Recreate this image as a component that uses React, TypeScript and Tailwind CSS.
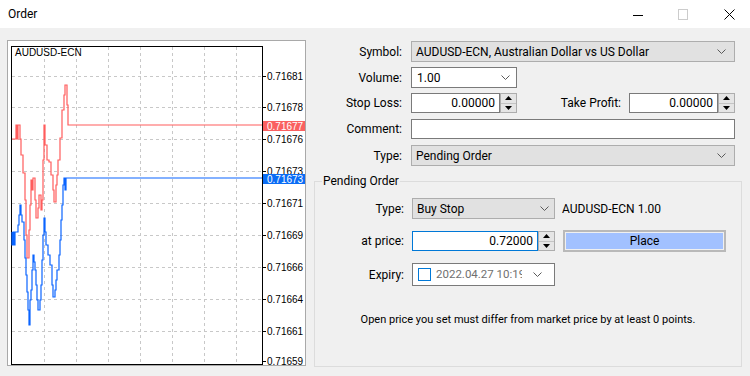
import React from "react";

// price axis labels, y is the grid line they sit on
const axis = [
  { y: 76, v: "0.71681" },
  { y: 107, v: "0.71678" },
  { y: 139, v: "0.71676" },
  { y: 171, v: "0.71673" },
  { y: 203, v: "0.71671" },
  { y: 235, v: "0.71669" },
  { y: 267, v: "0.71666" },
  { y: 299, v: "0.71664" },
  { y: 331, v: "0.71661" },
  { y: 361, v: "0.71659" },
];
const gridX = [44, 76, 108, 140, 172, 204, 236];
const gridY = [76, 107, 139, 171, 203, 235, 267, 299, 331];

const askPath =
  "M12,139 H16 V125 H17 V139 H18 V125 H20 V139 H21 V155 H23 V173 H25 V200 H26 V235 H27 V258 H29 V230 H30 V205 H31 V180 H32 V190 H33 V178 H35 V200 H36 V218 H38 V208 H39 V195 H41 V210 H42 V200 H43 V160 H44 V125 H45 V145 H47 V160 H49 V162 H51 V175 H53 V190 H54 V202 H56 V185 H57 V175 H58 V160 H60 V138 H62 V110 H64 V95 H65 V85 H67 V105 H68 V125 H262";
const bidPath =
  "M12,232 V245 H13 V232 H14 V245 H15 V232 H18 V225 H19 V215 H20 V205 H21 V215 H22 V222 H24 V240 H25 V258 H26 V275 H27 V292 H28 V310 H29 V325 H30 V300 H31 V290 H32 V270 H33 V255 H34 V262 H35 V270 H36 V285 H37 V300 H38 V310 H40 V300 H41 V285 H42 V260 H43 V235 H44 V218 H45 V232 H46 V245 H48 V255 H50 V265 H52 V285 H53 V297 H55 V290 H56 V280 H57 V270 H59 V255 H60 V240 H61 V220 H62 V205 H63 V185 H64 V178 H65 V190 H66 V178 H262";

const Chart = () => (
  <svg
    width={300}
    height={327}
    viewBox="7 40 300 327"
    className="shrink-0 font-['Liberation_Sans',sans-serif]"
  >
    <rect x={7.5} y={40.5} width={298} height={325} fill="#fff" stroke="#a9a9a9" />
    <rect x={11.5} y={46.5} width={251} height={318} fill="#fff" stroke="#000" />
    {gridX.map((x) => (
      <line key={x} x1={x + 0.5} x2={x + 0.5} y1={47} y2={364} stroke="#c8c8c8" strokeDasharray="3 3" />
    ))}
    {gridY.map((y) => (
      <line key={y} x1={12} x2={262} y1={y + 0.5} y2={y + 0.5} stroke="#c8c8c8" strokeDasharray="3 3" />
    ))}
    <text x={15} y={56} fontSize={10} fill="#000">
      AUDUSD-ECN
    </text>
    {axis.map((a) => (
      <g key={a.v}>
        <line x1={262} x2={266} y1={a.y + 0.5} y2={a.y + 0.5} stroke="#000" />
        <text x={267} y={a.y + 4} fontSize={10} fill="#000">
          {a.v}
        </text>
      </g>
    ))}
    <path d={askPath} fill="none" stroke="#ff5c5c" strokeWidth={1.2} />
    <path d={bidPath} fill="none" stroke="#0a64ff" strokeWidth={1.2} />
    <rect x={263} y={121} width={42} height={10} fill="#fa6060" />
    <text x={267} y={129.5} fontSize={10} fill="#fff">
      0.71677
    </text>
    <rect x={263} y={174} width={42} height={10} fill="#0a6cf5" />
    <text x={267} y={182.5} fontSize={10} fill="#fff">
      0.71673
    </text>
  </svg>
);

const Chevron = ({ className = "" }: { className?: string }) => (
  <svg width={9} height={5} viewBox="0 0 9 5" className={className}>
    <path d="M0.5,0.5 L4.5,4.5 L8.5,0.5" fill="none" stroke="#5a5a5a" strokeWidth={1} />
  </svg>
);

const Spinner = () => (
  <div className="flex flex-col w-[17px] h-full border border-[#adadad] bg-[#e5e5e5]">
    <div className="flex-1 flex items-center justify-center border-b border-[#c4c4c4]">
      <svg width={7} height={4} viewBox="0 0 7 4">
        <path d="M3.5,0 L7,4 L0,4 Z" fill="#000" />
      </svg>
    </div>
    <div className="flex-1 flex items-center justify-center">
      <svg width={7} height={4} viewBox="0 0 7 4">
        <path d="M0,0 L7,0 L3.5,4 Z" fill="#000" />
      </svg>
    </div>
  </div>
);

const Label = ({ children, w = "w-[88px]" }: { children: React.ReactNode; w?: string }) => (
  <div className={`${w} shrink-0 text-right`}>{children}</div>
);

export default function App() {
  return (
    <div className="w-[750px] h-[376px] overflow-hidden bg-[#f0f0f0] text-[12px] text-black font-['Roboto',sans-serif]">
      {/* title bar */}
      <div className="h-[28px] bg-white flex items-center">
        <span className="ml-[8px]">Order</span>
        <div className="ml-auto flex items-center mr-[15px]">
          <svg width={10} height={11} viewBox="0 0 10 11">
            <line x1={0} x2={10} y1={6.5} y2={6.5} stroke="#000" />
          </svg>
          <svg width={10} height={11} viewBox="0 0 10 11" className="ml-[35px]">
            <rect x={0.5} y={0.5} width={9} height={10} fill="none" stroke="#cccccc" />
          </svg>
          <svg width={11} height={11} viewBox="0 0 11 11" className="ml-[36px]">
            <path d="M0.5,0.5 L10.5,10.5 M10.5,0.5 L0.5,10.5" stroke="#000" strokeWidth={1} />
          </svg>
        </div>
      </div>

      <div className="flex pt-[12px] pl-[7px]">
        <Chart />

        <div className="ml-[7px] w-[428px] flex flex-col">
          {/* Symbol */}
          <div className="flex items-center mt-[1px] h-[21px]">
            <Label>Symbol:</Label>
            <div className="ml-[9px] w-[324px] h-[21px] border border-[#adadad] bg-[#e1e1e1] flex items-center pl-[4px] pr-[8px]">
              <span className="flex-1">AUDUSD-ECN, Australian Dollar vs US Dollar</span>
              <Chevron />
            </div>
          </div>
          {/* Volume */}
          <div className="flex items-center mt-[5px] h-[21px]">
            <Label>Volume:</Label>
            <div className="ml-[9px] w-[106px] h-[21px] border border-[#7a7a7a] bg-white flex items-center pl-[5px] pr-[6px]">
              <span className="flex-1">1.00</span>
              <Chevron />
            </div>
          </div>
          {/* Stop loss / take profit */}
          <div className="flex items-center mt-[5px] h-[20px]">
            <Label>Stop Loss:</Label>
            <div className="ml-[9px] w-[89px] h-[20px] border border-[#7a7a7a] bg-white flex items-center justify-end pr-[4px]">
              0.00000
            </div>
            <Spinner />
            <div className="w-[104px] text-right">Take Profit:</div>
            <div className="ml-[8px] w-[89px] h-[20px] border border-[#7a7a7a] bg-white flex items-center justify-end pr-[4px]">
              0.00000
            </div>
            <Spinner />
          </div>
          {/* Comment */}
          <div className="flex items-center mt-[6px] h-[20px]">
            <Label>Comment:</Label>
            <div className="ml-[9px] w-[324px] h-[20px] border border-[#7a7a7a] bg-white" />
          </div>
          {/* Type */}
          <div className="flex items-center mt-[6px] h-[21px]">
            <Label>Type:</Label>
            <div className="ml-[9px] w-[324px] h-[21px] border border-[#adadad] bg-[#e1e1e1] flex items-center pl-[4px] pr-[8px]">
              <span className="flex-1">Pending Order</span>
              <Chevron />
            </div>
          </div>

          {/* Pending order group */}
          <div className="relative mt-[15px] h-[186px] border border-[#dcdcdc] flex flex-col">
            <span className="absolute -top-[9px] left-[7px] px-[1px] bg-[#f0f0f0] leading-[16px]">
              Pending Order
            </span>
            <div className="flex items-center mt-[16px] h-[21px]">
              <Label w="w-[89px]">Type:</Label>
              <div className="ml-[8px] w-[143px] h-[21px] border border-[#adadad] bg-[#e1e1e1] flex items-center pl-[4px] pr-[5px]">
                <span className="flex-1">Buy Stop</span>
                <Chevron />
              </div>
              <span className="ml-[7px]">AUDUSD-ECN 1.00</span>
            </div>
            <div className="flex items-center mt-[11px] h-[22px]">
              <Label w="w-[89px]">at price:</Label>
              <div className="ml-[8px] flex h-[20px]">
                <div className="w-[126px] h-[20px] border border-[#0078d7] bg-white flex items-center justify-end pr-[4px]">
                  0.72000
                </div>
                <Spinner />
              </div>
              <div className="ml-[8px] w-[163px] h-[22px] border-2 border-[#b9b9b9] p-px">
                <div className="w-full h-full bg-[#a2c1ff] flex items-center justify-center">Place</div>
              </div>
            </div>
            <div className="flex items-center mt-[11px] h-[23px]">
              <Label w="w-[89px]">Expiry:</Label>
              <div className="ml-[8px] w-[143px] h-[23px] border border-[#7a7a7a] bg-white flex items-center pl-[5px] pr-[12px]">
                <div className="w-[13px] h-[13px] border border-[#0078d7] bg-white shrink-0" />
                <span className="ml-[5px] w-[86px] overflow-hidden whitespace-nowrap text-[#707070] text-[11.5px]">
                  2022.04.27 10:19
                </span>
                <Chevron className="ml-auto" />
              </div>
            </div>
            <div className="mt-[26px] text-center text-[11px]">
              Open price you set must differ from market price by at least 0 points.
            </div>
          </div>
        </div>
      </div>
    </div>
  );
}
